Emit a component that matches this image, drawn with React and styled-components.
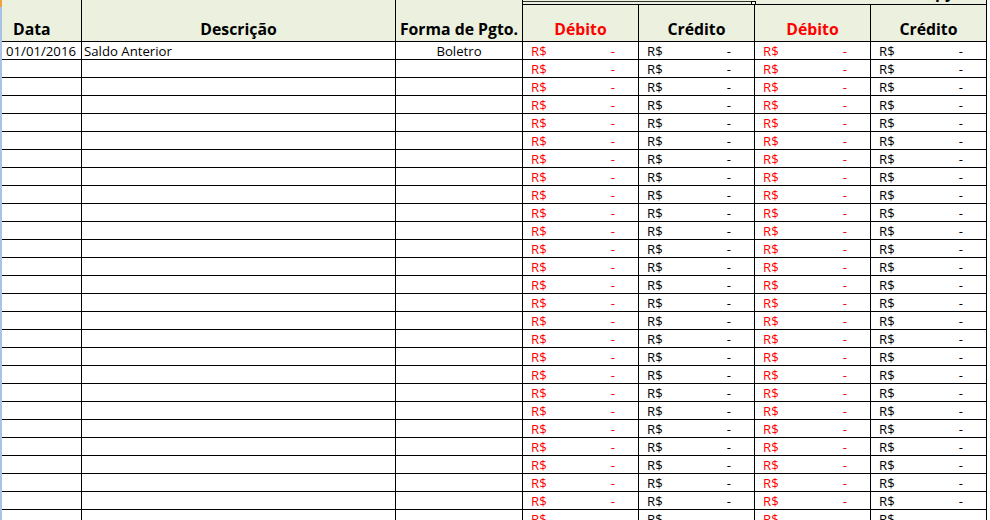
import React from "react";
import styled, { createGlobalStyle } from "styled-components";

const GlobalStyle = createGlobalStyle`
  html, body {
    margin: 0;
    padding: 0;
    background: #ffffff;
    overflow: hidden;
  }
  body {
    font-family: "Open Sans", Lato, sans-serif;
  }
`;

const Window = styled.div`
  display: flex;
  width: 990px;
  height: 520px;
  overflow: hidden;
  background: #ffffff;
`;

const Strip = styled.div`
  flex: 0 0 2px;
  background: linear-gradient(#f2a13b 0, #f2a13b 7px, #a8c3e6 7px);
`;

const Sheet = styled.div`
  display: grid;
  grid-template-columns: 80px 314px 127px 116px 116px 116px 116px;
  grid-template-rows: 5px 37px;
  grid-auto-rows: 18px;
  align-content: start;
  font-size: 13.2px;
  color: #000;
`;

const HeadCell = styled.div`
  grid-row: ${(p) => p.$row};
  background: #ebf1de;
  border-right: 1px solid #000;
  border-bottom: 1px solid #000;
  display: flex;
  align-items: flex-end;
  justify-content: ${(p) => (p.$left ? "flex-start" : "center")};
  padding: 0 0 3px ${(p) => (p.$left ? "11px" : "0")};
  font-size: 15.8px;
  font-weight: 700;
  line-height: 18px;
  color: ${(p) => (p.$red ? "#ff0000" : "#000")};
  white-space: nowrap;
  overflow: hidden;
`;

const TopGroup = styled.div`
  grid-column: 4 / 8;
  grid-row: 1;
  position: relative;
  background: #ebf1de;
  border-bottom: 1px solid #000;
  border-right: 1px solid #000;
  display: flex;
  align-items: flex-end;
  justify-content: flex-end;
  padding-right: 32px;
  overflow: hidden;
`;

const TopLabel = styled.span`
  font-size: 15.8px;
  font-weight: 700;
  line-height: 15px;
  margin-bottom: 4px;
  white-space: nowrap;
`;

const Selection = styled.div`
  position: absolute;
  left: 0;
  top: 1px;
  width: 231px;
  height: 3px;
  border-top: 1px solid #333;
  border-right: 1px solid #000;
`;

const Handle = styled.div`
  position: absolute;
  left: 228px;
  top: 1px;
  width: 3px;
  height: 3px;
  background: #fff;
  border: 1px solid #000;
`;

const Cell = styled.div`
  border-right: 1px solid #000;
  border-bottom: 1px solid #000;
  display: flex;
  align-items: flex-end;
  justify-content: ${(p) => p.$align || "flex-start"};
  padding: ${(p) => p.$pad || "0"};
  line-height: 16px;
  white-space: nowrap;
  overflow: hidden;
`;

const Money = styled(Cell)`
  justify-content: space-between;
  padding: 0 23px 0 8px;
  color: ${(p) => (p.$red ? "#ff0000" : "#000")};
`;

const ROWS = 27;

function MoneyCells() {
  return (
    <>
      <Money $red><span>R$</span><span>-</span></Money>
      <Money><span>R$</span><span>-</span></Money>
      <Money $red><span>R$</span><span>-</span></Money>
      <Money><span>R$</span><span>-</span></Money>
    </>
  );
}

export default function App() {
  const rows = [];
  for (let i = 0; i < ROWS; i++) {
    const first = i === 0;
    rows.push(
      <React.Fragment key={i}>
        <Cell $align="flex-end" $pad="0 5px 0 0">{first ? "01/01/2016" : ""}</Cell>
        <Cell $pad="0 0 0 2px">{first ? "Saldo Anterior" : ""}</Cell>
        <Cell $align="center">{first ? "Boletro" : ""}</Cell>
        <MoneyCells />
      </React.Fragment>
    );
  }

  return (
    <>
      <GlobalStyle />
      <Window>
        <Strip />
        <Sheet>
          <HeadCell $row="1 / 3" $left>Data</HeadCell>
          <HeadCell $row="1 / 3">Descrição</HeadCell>
          <HeadCell $row="1 / 3">Forma de Pgto.</HeadCell>
          <TopGroup>
            <Selection />
            <Handle />
            <TopLabel>Saldo, Copy</TopLabel>
          </TopGroup>
          <HeadCell $row="2" $red>Débito</HeadCell>
          <HeadCell $row="2">Crédito</HeadCell>
          <HeadCell $row="2" $red>Débito</HeadCell>
          <HeadCell $row="2">Crédito</HeadCell>
          {rows}
        </Sheet>
      </Window>
    </>
  );
}
